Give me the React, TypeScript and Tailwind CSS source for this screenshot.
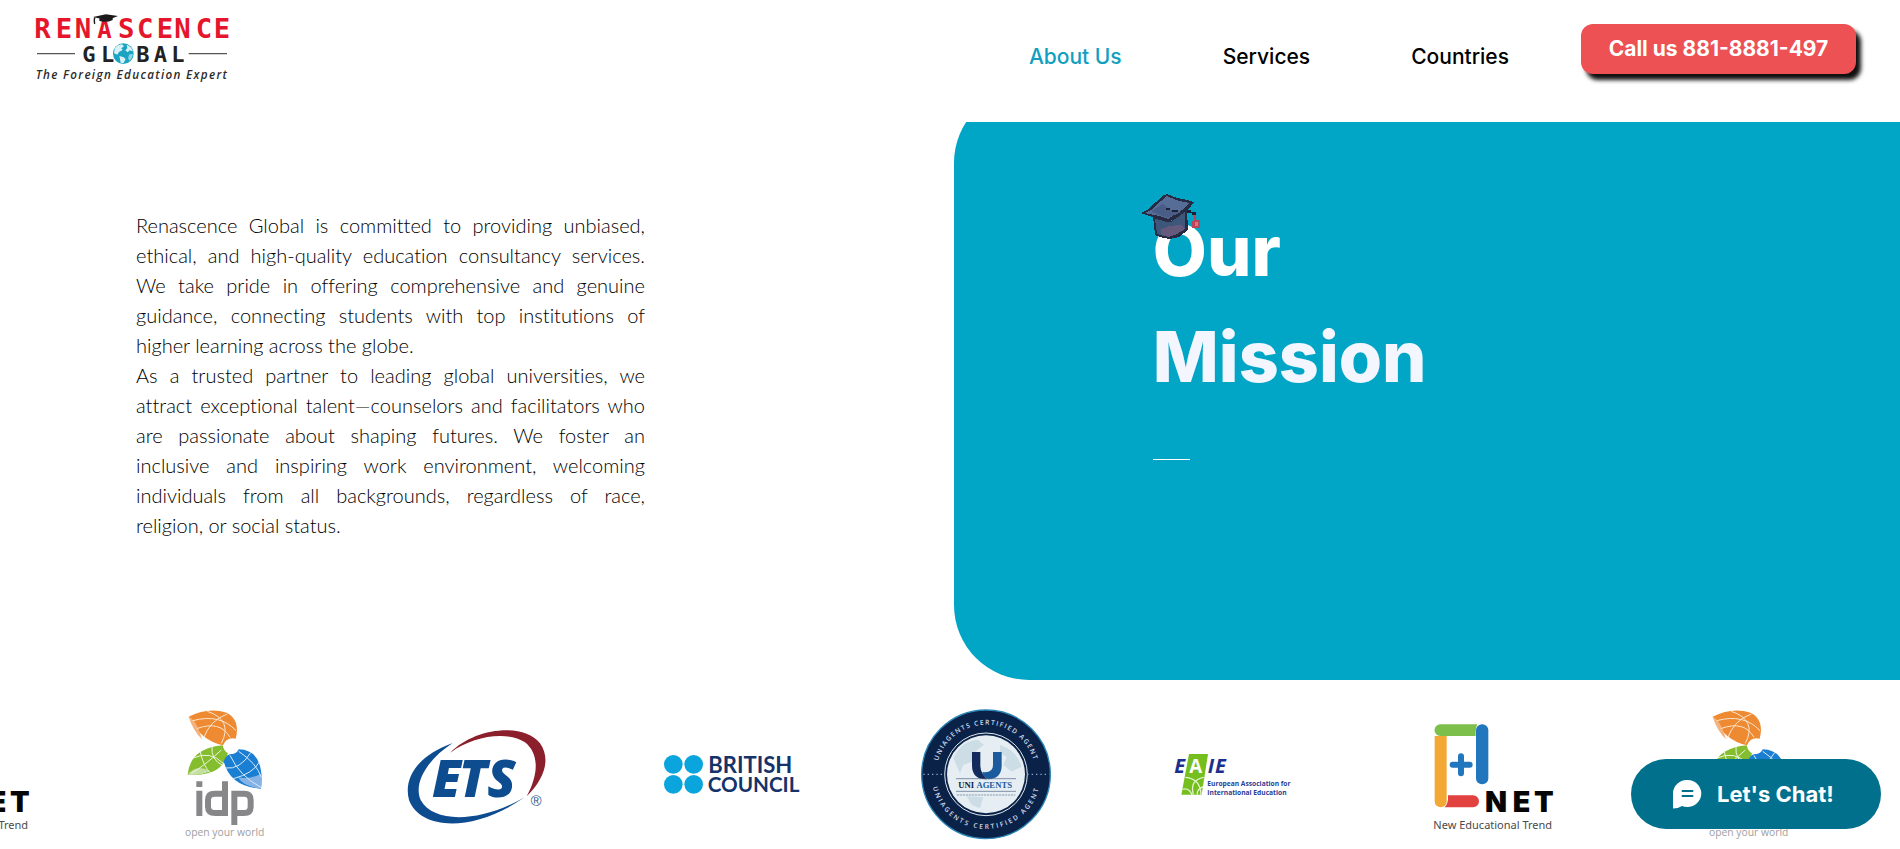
import React from "react";

const sans = "font-[Inter,'Open_Sans',sans-serif]";

function BrandLogo() {
  return (
    <svg viewBox="0 0 780 300" className="h-[100px] w-[260px]" role="img" aria-label="Renascence Global">
      <g fontFamily="'DejaVu Sans Mono',monospace" fontWeight="700" fontSize="82" fill="#e5162b">
        <text x="103 167 224" y="115">REN</text>
        <text x="292" y="115" fontSize="72">A</text>
        <text x="354 411 470 523 587 641" y="115">SCENCE</text>
      </g>
      <path d="M279 51 L318 43 L354 48 L322 61 Z" fill="#1d1a1c" />
      <path d="M298 55 L298 62 Q318 70 338 60 L338 53 Z" fill="#1d1a1c" />
      <path d="M285 52 Q281 58 284 72" stroke="#1d1a1c" strokeWidth="4" fill="none" />
      <path d="M111 161 H225 M566 161 H681" stroke="#555" strokeWidth="4" />
      <text x="247 303 409 461 514" y="186" fontFamily="'DejaVu Sans Mono',monospace" fontWeight="700" fontSize="66" fill="#222">
        GLBAL
      </text>
      <circle cx="370" cy="161" r="31" fill="#1ba3c2" />
      <path d="M344 146 Q350 134 366 133 L372 139 L364 145 L368 150 L357 156 L352 164 L342 160 Z" fill="#d9f1f6" />
      <path d="M380 134 Q396 141 399 154 L389 151 L383 157 L376 151 L382 145 Z" fill="#d9f1f6" />
      <path d="M358 168 L371 172 L377 178 L370 190 L362 188 L360 178 Z" fill="#d9f1f6" />
      <path d="M388 163 L399 162 Q397 176 389 183 L384 174 Z" fill="#8fd3e0" />
      <text x="107" y="236" fontFamily="'Open Sans',sans-serif" fontStyle="italic" fontWeight="600" fontSize="35" letterSpacing="4" fill="#2c2c2c">
        The Foreign Education Expert
      </text>
    </svg>
  );
}

function GradCap() {
  return (
    <svg viewBox="0 0 60 45" className="absolute -left-3 -top-1 h-[45px] w-[60px]" shapeRendering="crispEdges" aria-hidden="true">
      <path d="M12 22 L14 41 L19 43 L28 45 L38 43 L47 36 L46 15 L30 27 Z" fill="#262a42" />
      <path d="M14 25 L16 40 L22 42 L36 40 L44 35 L44 18 L30 28 Z" fill="#3d5679" />
      <path d="M19 36 L28 32 L40 31 L44 35 L36 40 L28 43 L21 41 Z" fill="#665a7c" />
      <path d="M0 19 L8 15 L11 11 L18 6 L21 2 L26 0 L36 4 L46 6 L53 8 L50 12 L46 17 L38 21 L32 26 L25 28 L17 25 L8 22 Z" fill="#262a42" />
      <path d="M4 19 L10 16 L20 7 L26 2 L35 6 L48 9 L43 15 L33 21 L27 25 L18 22 Z" fill="#566d98" />
      <path d="M10 17 L22 10 L29 16 L40 18 L27 24 L18 21 Z" fill="#495d86" />
      <path d="M25 14 H29 V16 H37 V18 H31 V16 H25 Z M46 16 H50 V18 H55 V21 H51 V19 H46 Z" fill="#1d2036" />
      <path d="M53 21 H55 V26 H59 V34 H51 V27 H53 Z" fill="#b8455c" />
      <path d="M54 28 H57 V32 H54 Z" fill="#e07079" />
    </svg>
  );
}

const logoBox = "h-[159px] w-40";

function NetLogo() {
  return (
    <svg viewBox="45 0 480 477" className={logoBox} role="img" aria-label="New Educational Trend">
      <path d="M104 138 H140 V334 A18 18 0 0 1 104 334 Z" fill="#f2a833" />
      <path d="M144 316 H219 A18 18 0 0 1 219 352 H134 Q146 340 144 316 Z" fill="#e2423f" />
      <path d="M121 103 H232 Q226 116 227 138 H121 A17.500 17.500 0 0 1 121 103 Z" fill="#7cc04b" />
      <rect x="228" y="103" width="37" height="180" rx="18" fill="#2176bd" />
      <path d="M183 199 V250 M158 224 H209" stroke="#2176bd" strokeWidth="18" strokeLinecap="round" />
      <text x="255 338 402" y="366" fontFamily="Inter,sans-serif" fontWeight="900" fontSize="86" fill="#060606">NET</text>
      <text x="100" y="416" fontFamily="'Noto Sans',sans-serif" fontSize="33" fill="#4a4a4a">New Educational Trend</text>
    </svg>
  );
}

function IdpLogo() {
  return (
    <svg viewBox="435 0 480 477" className={logoBox} role="img" aria-label="IDP">
      <path d="M566 80 Q625 50 680 68 Q722 90 707 146 Q680 140 669 166 Q600 150 566 80 Z" fill="#ee8a31" />
      <path d="M566 80 Q590 90 606 148 Q578 120 566 80 Z" fill="#f6b27c" />
      <path d="M578 92 Q660 70 708 122 M590 116 Q660 90 690 142 M622 64 Q700 90 664 160 M610 146 Q630 90 682 72" fill="none" stroke="#fbe6cf" strokeWidth="3" />
      <path d="M563 254 Q570 175 668 166 Q672 185 684 190 Q665 262 563 254 Z" fill="#84bd2d" />
      <path d="M563 254 Q590 220 630 244 Q600 258 563 254 Z" fill="#c5dfa2" />
      <path d="M580 204 Q630 180 672 222 M600 182 Q610 230 632 250 M636 170 Q632 210 668 226 M574 250 Q610 230 664 180" fill="none" stroke="#eef6dc" strokeWidth="3" />
      <path d="M671 214 Q680 190 697 192 Q711 190 716 178 Q795 180 783 296 Q690 290 671 214 Z" fill="#1a7fd2" />
      <path d="M783 296 Q730 290 714 262 Q750 270 786 250 Z" fill="#85b3e6" />
      <path d="M676 234 Q720 240 752 188 M700 266 Q760 250 778 216 M690 196 Q720 260 783 292 M716 184 Q770 220 784 262" fill="none" stroke="#d8eafa" strokeWidth="3" />
      <g fill="none" stroke="#87878a" strokeWidth="18">
        <path d="M598 302 V378 M598 274 V291" />
        <path d="M675 274 V369 H646 Q624 369 624 350 V330 Q624 311 644 311 H675" />
        <path d="M703 405 V311 H732 Q752 311 752 330 V350 Q752 369 732 369 H703" />
      </g>
      <text x="555" y="437" fontFamily="'Open Sans',sans-serif" fontSize="31" fontWeight="500" fill="#a0a0a0">open your world</text>
    </svg>
  );
}

function EtsLogo() {
  return (
    <svg viewBox="27 -30 480 477" className={logoBox} role="img" aria-label="ETS">
      <path d="M188 129 C80 168 40 236 57 300 C90 390 250 400 405 291 C270 370 130 370 92 300 C70 250 110 180 188 129 Z" fill="#0d4c8f" />
      <path d="M181 158 C250 85 400 65 450 130 C485 180 460 240 410 289 C448 220 446 160 405 127 C350 92 250 108 181 158 Z" fill="#8b1f2b" />
      <text x="126 206 292" y="290" fontFamily="'Open Sans',sans-serif" fontWeight="800" fontStyle="italic" fontSize="156" fill="#0d4c8f">ETS</text>
      <text x="422" y="318" fontFamily="'Liberation Sans',sans-serif" fontSize="44" fill="#285a8e">®</text>
    </svg>
  );
}

function BritishCouncilLogo() {
  return (
    <svg viewBox="789 -30 480 477" className={logoBox} role="img" aria-label="British Council">
      <g fill="#0aa5dc">
        <circle cx="850" cy="193" r="28" />
        <circle cx="911" cy="193" r="28" />
        <circle cx="850" cy="253" r="28" />
        <circle cx="911" cy="253" r="28" />
      </g>
      <g fontFamily="Lato,'Noto Sans',sans-serif" fontWeight="700" fontSize="66" fill="#15336a">
        <text x="955" y="218">BRITISH</text>
        <text x="953" y="275" fontSize="62">COUNCIL</text>
      </g>
    </svg>
  );
}

function UniAgentsLogo() {
  return (
    <svg viewBox="21 0 480 477" className={logoBox} role="img" aria-label="Uni Agents certified agent">
      <defs>
        <path id="ring-top" d="M109 253 A149 149 0 0 1 407 253" />
        <path id="ring-bottom" d="M94 253 A164 164 0 0 0 422 253" />
      </defs>
      <circle cx="258" cy="253" r="193" fill="#0a2148" stroke="#2a86b5" strokeWidth="4" />
      <circle cx="258" cy="253" r="124" fill="#0a2148" stroke="#dfe8ee" strokeWidth="3" />
      <circle cx="258" cy="253" r="117" fill="#e6eef3" />
      <path d="M160 205 Q185 150 235 150 L252 165 L225 185 L215 215 L190 225 L180 250 Z M300 165 Q350 180 365 230 L335 245 L310 225 L320 200 L300 190 Z M200 318 L250 322 L240 355 L215 345 Z" fill="#cddde6" />
      <path d="M70 253 H136 M382 253 H448" stroke="#8fa9c6" strokeWidth="4" strokeDasharray="4 9" />
      <g fontFamily="'Open Sans',sans-serif" fontSize="20" fontWeight="600" fill="#cfdbe8">
        <text textAnchor="middle" letterSpacing="4"><textPath href="#ring-top" startOffset="50%">UNIAGENTS CERTIFIED AGENT</textPath></text>
        <text textAnchor="middle" letterSpacing="6"><textPath href="#ring-bottom" startOffset="50%">UNIAGENTS CERTIFIED AGENT</textPath></text>
      </g>
      <path d="M216 186 H241 V228 Q242 250 262 268 Q216 270 216 226 Z" fill="#122b5c" />
      <path d="M279 186 H305 V228 Q304 266 264 268 Q248 258 247 246 Q279 250 279 226 Z" fill="#1b5b9d" />
      <path d="M168 266 H348 M168 304 H348" stroke="#4f6482" strokeWidth="2" />
      <text x="175" y="295" fontFamily="'Liberation Serif',serif" fontWeight="700" fontSize="26" fill="#14233f">
        UNI <tspan fill="#1b5b9d">AGENTS</tspan>
      </text>
      <path d="M170 315 H346" stroke="#a9bac8" strokeWidth="4" strokeDasharray="7 2" />
    </svg>
  );
}

function EaieLogo() {
  return (
    <svg viewBox="33 -120 480 477" className={logoBox} role="img" aria-label="EAIE">
      <path d="M117 72 H174 L155 194 H94 Z" fill="#74be1e" />
      <path d="M106 142 Q152 146 153 194 M98 178 Q116 172 126 194 M161 142 Q118 150 130 194 M160 170 Q140 178 142 194" fill="none" stroke="#e4f4cf" strokeWidth="4" />
      <g fontFamily="'Open Sans',sans-serif" fontWeight="700" fontStyle="italic" fontSize="60" fill="#1c2f8c">
        <text x="73" y="130">E</text>
        <text x="118" y="130" fill="#fff" fontStyle="normal" fontSize="56">A</text>
        <text x="173 195" y="130">IE</text>
      </g>
      <g fontFamily="'Open Sans',sans-serif" fontWeight="700" fontSize="20" fill="#2b3d94">
        <text x="172" y="167">European Association for</text>
        <text x="172" y="194">International Education</text>
      </g>
    </svg>
  );
}

const partners = [NetLogo, IdpLogo, EtsLogo, BritishCouncilLogo, UniAgentsLogo, EaieLogo, NetLogo, IdpLogo];

export default function App() {
  return (
    <div className={`min-h-screen overflow-x-hidden bg-white text-black ${sans}`}>
      <header className="relative z-10 flex h-[122px] items-start justify-between bg-white pr-11">
        <a href="#home"><BrandLogo /></a>
        <div className="flex items-start gap-[72px]">
          <nav className="flex gap-[101px] pt-[42px] text-[21px]/[30px] font-medium">
            <a href="#about" className="text-[#119fc0]">About Us</a>
            <a href="#services">Services</a>
            <a href="#countries">Countries</a>
          </nav>
          <a href="tel:8818881497" className="mt-6 flex h-[50px] w-[275px] items-center justify-center whitespace-nowrap rounded-xl bg-[#ed5153] text-[21px] font-bold text-white shadow-[5px_6px_4px_#111]">
            Call us 881-8881-497
          </a>
        </div>
      </header>

      <main>
        <section className="-mt-[34px] flex h-[592px]">
          <div className="flex-1 pl-[136px] pt-[122px]">
            <div className="max-w-[509px] text-justify font-[Lato,sans-serif] text-[20px]/[30px] font-light [font-variant-ligatures:none]">
              <p>
                Renascence Global is committed to providing unbiased, ethical, and high-quality education consultancy
                services. We take pride in offering comprehensive and genuine guidance, connecting students with top
                institutions of higher learning across the globe.
              </p>
              <p>
                As a trusted partner to leading global universities, we attract exceptional talent—counselors and
                facilitators who are passionate about shaping futures. We foster an inclusive and inspiring work
                environment, welcoming individuals from all backgrounds, regardless of race, religion, or social status.
              </p>
            </div>
          </div>
          <div className="w-[49.8%] rounded-l-[75px] bg-[#01a6c6] pl-[199px] pt-[110px]">
            <div className="relative">
              <h1 className="text-[70px]/[106px] font-extrabold text-white">
                <span className="block">Our</span>
                <span className="block text-[#f3f6ff]">Mission</span>
              </h1>
              <GradCap />
            </div>
            <div className="mt-[49px] h-px w-[37px] bg-white" />
          </div>
        </section>

        <section aria-label="Partners" className="overflow-hidden pt-[10px]">
          <div className="-ml-[156px] flex">
            {partners.map((Logo, i) => (
              <div key={i} className="flex w-[254px] shrink-0 justify-center"><Logo /></div>
            ))}
          </div>
        </section>
      </main>

      <button type="button" className="fixed bottom-5 right-[19px] z-20 flex h-[70px] w-[250px] items-center gap-[15px] rounded-full bg-[#00708c] pl-[42px] text-[22px] font-bold text-white">
        <svg viewBox="0 0 29 29" className="size-[29px]" aria-hidden="true">
          <path d="M14.500 0 A14 13.500 0 1 1 9 26 Q5 28.500 0 28.500 V13.500 A14 13.500 0 0 1 14.500 0 Z" fill="#fff" />
          <path d="M9.500 11 H19.500 M9.500 16 H19.500" stroke="#00708c" strokeWidth="2" strokeLinecap="round" />
        </svg>
        Let's Chat!
      </button>
    </div>
  );
}
